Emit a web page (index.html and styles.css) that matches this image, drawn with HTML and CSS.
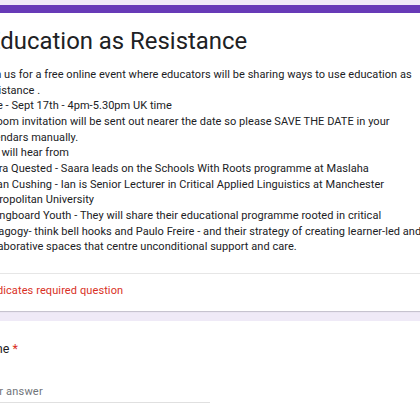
FILE: index.html
```html
<!DOCTYPE html>
<html>
<head>
<meta charset="utf-8">
<link rel="stylesheet" href="styles.css">
</head>
<body>
<div class="page">
  <div class="card header-card">
    <div class="accent"></div>
    <div class="header-body">
      <h1 class="title">Education as Resistance</h1>
      <div class="desc">
        <div class="line">Join us for a free online event where educators will be sharing ways to use education as</div>
        <div class="line">Resistance .</div>
        <div class="line">Date - Sept 17th - 4pm-5.30pm UK time</div>
        <div class="line">A Zoom invitation will be sent out nearer the date so please SAVE THE DATE in your</div>
        <div class="line">calendars manually.</div>
        <div class="line">You will hear from</div>
        <div class="line">Saara Quested - Saara leads on the Schools With Roots programme at Maslaha</div>
        <div class="line">Dr Ian Cushing - Ian is Senior Lecturer in Critical Applied Linguistics at Manchester</div>
        <div class="line">Metropolitan University</div>
        <div class="line">Springboard Youth - They will share their educational programme rooted in critical</div>
        <div class="line">pedagogy- think bell hooks and Paulo Freire - and their strategy of creating learner-led and</div>
        <div class="line">collaborative spaces that centre unconditional support and care.</div>
      </div>
    </div>
    <div class="required-note">* Indicates required question</div>
  </div>
  <div class="card question-card">
    <div class="q-title">Name <span class="star">*</span></div>
    <div class="answer">Your answer</div>
  </div>
</div>
</body>
</html>
```
FILE: styles.css
```css
html, body {
  margin: 0;
  padding: 0;
}
body {
  background: #efeaf7;
  font-family: Roboto, "Liberation Sans", sans-serif;
  color: #202124;
  overflow: hidden;
  width: 420px;
  height: 420px;
}
.page {
  margin-left: -44px;
  width: 508px;
  padding-top: 5px;
  display: flex;
  flex-direction: column;
  gap: 10px;
}
.card {
  background: #fff;
  border-radius: 8px;
  box-shadow: 0 1px 1px rgba(60, 64, 67, 0.25);
  overflow: hidden;
}
.accent {
  height: 8px;
  background: #673ab7;
}
.header-body {
  padding: 12px 24px 18px;
}
.title {
  margin: 0 0 0 7px;
  font-weight: 400;
  font-size: 23.9px;
  line-height: 32px;
  color: #202124;
}
.desc {
  margin-top: 10px;
  font-size: 11px;
  line-height: 15.65px;
  letter-spacing: 0.05px;
  white-space: nowrap;
}
.required-note {
  border-top: 1.5px solid #e6e6e6;
  padding: 9px 24px 12px;
  font-size: 11px;
  line-height: 15.65px;
  letter-spacing: 0.1px;
  color: #d93025;
}
.question-card {
  padding: 19px 24px 30px;
}
.q-title {
  margin-left: -4px;
  font-size: 12.5px;
  line-height: 18px;
}
.star {
  color: #d93025;
}
.answer {
  margin-top: 26px;
  width: 230px;
  font-size: 11px;
  line-height: 15px;
  letter-spacing: 0.2px;
  color: #70757a;
  padding-bottom: 3px;
  border-bottom: 1px solid #e0e0e0;
}
```
